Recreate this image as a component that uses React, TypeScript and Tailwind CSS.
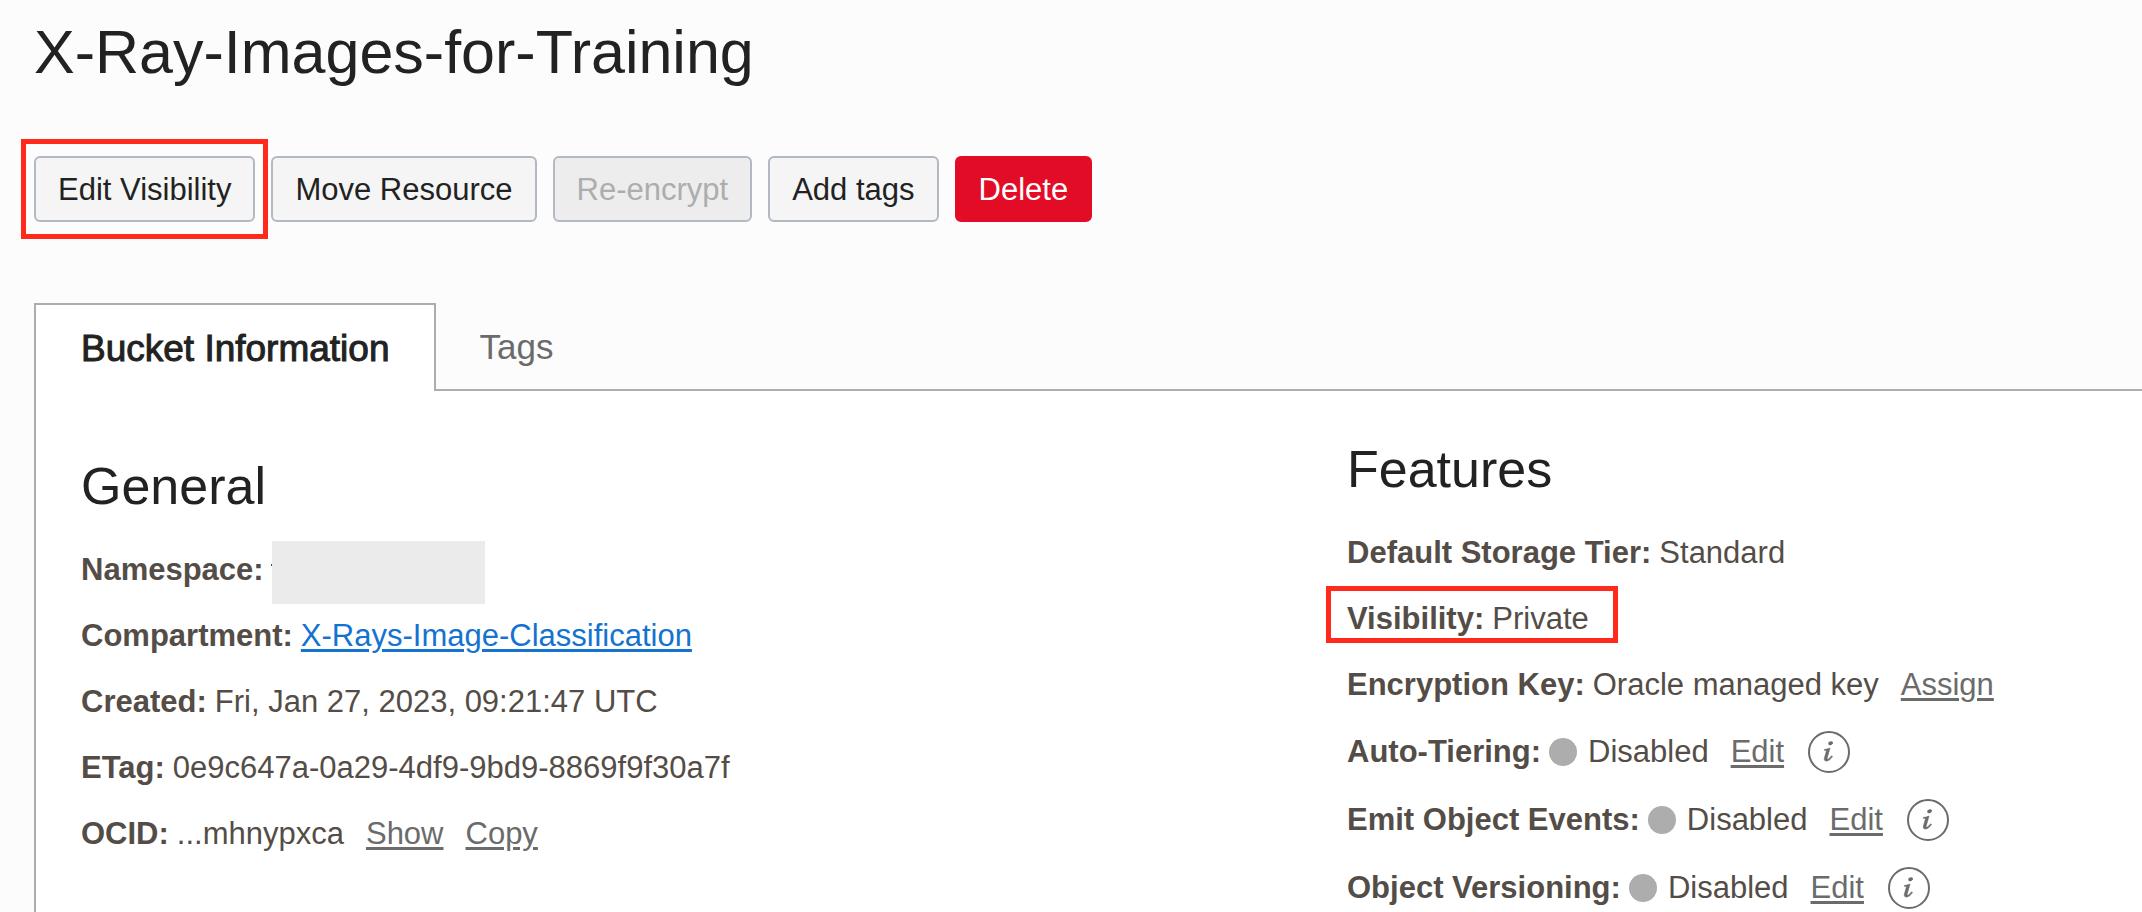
import type { ReactNode } from "react";

const buttonBase =
  "h-[66px] rounded-[6px] border-2 px-[22px] text-[31px] leading-none whitespace-nowrap";
const buttonPlain = "border-[#b2b9c3] bg-[#f5f5f5] text-[#222222]";

function Field({ label, children }: { label: string; children?: ReactNode }) {
  return (
    <div className="flex h-[66px] items-center whitespace-nowrap">
      <dt className="mr-2 font-bold">{label}:</dt>
      <dd className="flex items-center">{children}</dd>
    </div>
  );
}

function Action({ children }: { children: ReactNode }) {
  return (
    <a href="#" className="ml-[22px] text-[#6b6b6b] underline decoration-3 underline-offset-3">
      {children}
    </a>
  );
}

function InfoIcon() {
  return (
    <svg viewBox="0 0 42 42" className="size-[42px]" fill="none" aria-hidden="true">
      <circle cx="21" cy="21" r="20" stroke="#6b6b6b" strokeWidth="2" />
      <ellipse cx="22.600" cy="12.200" rx="2.500" ry="1.900" transform="rotate(-20 22.600 12.200)" fill="#6b6b6b" />
      <path
        d="M16.300 18.600c2-.3 3.700-.8 5.700-1.600l-2.800 10c-.3 1.100.1 1.500.9 1.100 1.300-.6 2.300-1.800 3.500-3.300l.9.600c-1.800 2.700-3.800 4.600-6.200 4.600-1.600 0-2.400-1.100-1.900-2.900l2-7.100c.1-.5-.1-.6-2.200-.7z"
        fill="#6b6b6b"
        stroke="#6b6b6b"
        strokeWidth="0.600"
      />
    </svg>
  );
}

function Toggleable({ label }: { label: string }) {
  return (
    <div className="flex h-[68px] items-center whitespace-nowrap">
      <dt className="mr-2 font-bold">{label}:</dt>
      <dd className="flex items-center">
        <span className="mr-[11px] size-7 rounded-full bg-[#adadad]" />
        Disabled
        <Action>Edit</Action>
        <button type="button" aria-label={`About ${label}`} className="ml-6">
          <InfoIcon />
        </button>
      </dd>
    </div>
  );
}

export default function App() {
  return (
    <main className="flex h-screen flex-col overflow-hidden bg-[#fcfcfc] pl-[34px] font-['Liberation_Sans',Arial,sans-serif] text-[#222222]">
      <h1 className="pt-[17px] text-[61px] leading-[70px]">X-Ray-Images-for-Training</h1>

      <div className="mt-[69px] flex gap-4">
        <div className="relative">
          <button type="button" className={`${buttonBase} ${buttonPlain}`}>Edit Visibility</button>
          <span className="pointer-events-none absolute -inset-x-[13px] -inset-y-[17px] border-5 border-[#ff2a1c]" />
        </div>
        <button type="button" className={`${buttonBase} ${buttonPlain}`}>Move Resource</button>
        <button type="button" disabled className={`${buttonBase} border-[#b2b9c3] bg-[#ededed] text-[#adadad]`}>
          Re-encrypt
        </button>
        <button type="button" className={`${buttonBase} ${buttonPlain}`}>Add tags</button>
        <button type="button" className={`${buttonBase} border-[#e30c27] bg-[#e30c27] text-white`}>Delete</button>
      </div>

      <div role="tablist" className="mt-[81px] flex h-[88px] shrink-0">
        <button
          type="button"
          role="tab"
          aria-selected="true"
          className="border-2 border-b-0 border-[#adadad] bg-white px-[45px] text-[37px] leading-none whitespace-nowrap [-webkit-text-stroke:1px_#222222]"
        >
          Bucket Information
        </button>
        <div className="flex grow border-b-2 border-[#adadad]">
          <button type="button" role="tab" aria-selected="false" className="px-[43px] text-[35px] leading-none text-[#6b6b6b]">
            Tags
          </button>
        </div>
      </div>

      <div className="grid grow grid-cols-[1266fr_795fr] border-l-2 border-[#adadad] bg-white pl-[45px] text-[31px] text-[#544d47]">
        <section className="pt-[64px]">
          <h2 className="text-[52px] leading-[62px] text-[#222222]">General</h2>
          <dl className="mt-5">
            <Field label="Namespace">
              <span className="relative mt-[4px] h-[63px] w-[213px] bg-[#ebebeb]">
                <span className="absolute top-[23px] -left-px h-0.5 w-px bg-[#544d47]" />
              </span>
            </Field>
            <Field label="Compartment">
              <a href="#" className="text-[#1473d0] underline decoration-3 underline-offset-3">
                X-Rays-Image-Classification
              </a>
            </Field>
            <Field label="Created">Fri, Jan 27, 2023, 09:21:47 UTC</Field>
            <Field label="ETag">0e9c647a-0a29-4df9-9bd9-8869f9f30a7f</Field>
            <Field label="OCID">
              ...mhnypxca
              <Action>Show</Action>
              <Action>Copy</Action>
            </Field>
          </dl>
        </section>
        <section className="pt-[47px]">
          <h2 className="text-[52px] leading-[62px] text-[#222222]">Features</h2>
          <dl className="mt-5">
            <Field label="Default Storage Tier">Standard</Field>
            <div className="relative w-fit">
              <Field label="Visibility">Private</Field>
              <span className="pointer-events-none absolute top-0 -right-[29px] bottom-[9px] -left-[21px] border-5 border-[#ff2a1c]" />
            </div>
            <Field label="Encryption Key">
              Oracle managed key
              <Action>Assign</Action>
            </Field>
            <Toggleable label="Auto-Tiering" />
            <Toggleable label="Emit Object Events" />
            <Toggleable label="Object Versioning" />
          </dl>
        </section>
      </div>
    </main>
  );
}
